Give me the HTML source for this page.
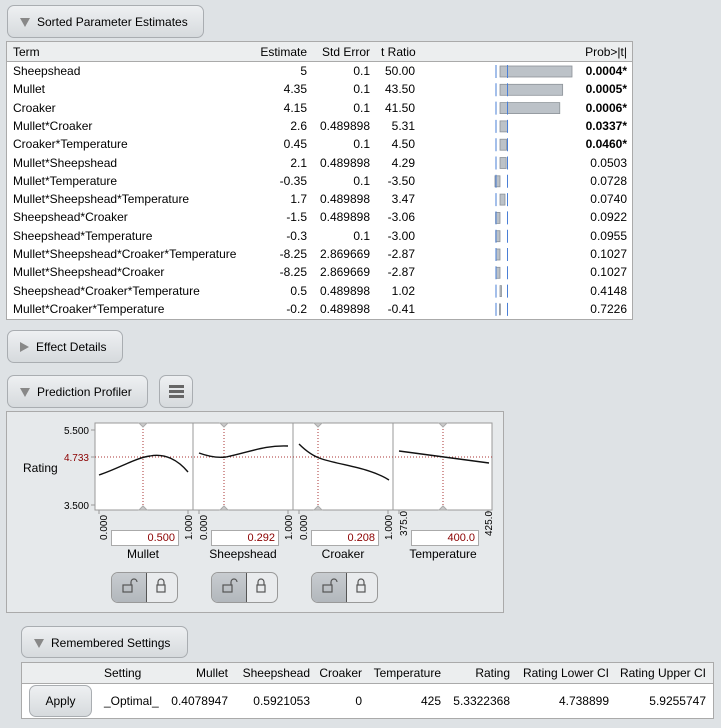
<!DOCTYPE html>
<html><head><style>
body{margin:0;width:721px;height:728px;background:#dee2e5;font-family:"Liberation Sans",sans-serif;font-size:12px;color:#000;position:relative;overflow:hidden}
.a{position:absolute;white-space:nowrap}
.btn{position:absolute;border:1px solid #a9adb1;border-radius:7px;background:linear-gradient(#eef0f2,#d6dadd);box-sizing:border-box}
.tri{display:inline-block;width:0;height:0;border-left:5px solid transparent;border-right:5px solid transparent;border-top:9px solid #888;margin-right:7px;vertical-align:-1px}
.trr{display:inline-block;width:0;height:0;border-top:5px solid transparent;border-bottom:5px solid transparent;border-left:9px solid #888;margin-right:7px;vertical-align:-1px}
.r{text-align:right}
.b{font-weight:bold}
.inp{position:absolute;width:68px;height:16px;background:#fff;border:1px solid #aaa;color:#8b0000;text-align:right;box-sizing:border-box;padding-right:3px;font-size:11px;line-height:14px}
.lock{position:absolute;width:67px;height:31px;border:1px solid #999;border-radius:7px;box-sizing:border-box;overflow:hidden;background:#e9ebed}
.lock div{position:absolute;top:0;bottom:0;left:0;width:34px;background:linear-gradient(#c8ccd0,#b2b7bc);border-right:1px solid #555}
</style></head><body>
<div class="btn" style="left:7px;top:5px;width:197px;height:33px;padding:9px 0 0 12px;font-size:12px"><span class="tri"></span>Sorted Parameter Estimates</div>
<div class="a" style="left:6px;top:41px;width:627px;height:279px;background:#fff;border:1px solid #aaa;box-sizing:border-box"></div>
<div class="a" style="left:7px;top:42px;width:625px;height:19px;background:#eceeef;border-bottom:1px solid #aaa"></div>
<svg class="a" style="left:0;top:0" width="721" height="330">
<g id="bars"></g>
</svg>
<div id="tbl"></div>
<div class="btn" style="left:7px;top:330px;width:116px;height:33px;padding:9px 0 0 12px"><span class="trr"></span>Effect Details</div>
<div class="btn" style="left:7px;top:375px;width:141px;height:33px;padding:9px 0 0 12px"><span class="tri"></span>Prediction Profiler</div>
<div class="btn" style="left:159px;top:375px;width:34px;height:33px"><div style="position:absolute;left:9px;top:9px;width:15px;height:3px;background:#666;box-shadow:0 5px 0 #666,0 10px 0 #666"></div></div>
<div class="a" style="left:6px;top:411px;width:498px;height:202px;border:1px solid #aaa;background:#e6e9eb;box-sizing:border-box"></div>
<svg class="a" style="left:0;top:0" width="721" height="620" font-family="Liberation Sans" font-size="10">
<rect x="95" y="423" width="397" height="87" fill="#fff" stroke="#999"/>
<line x1="193" y1="423" x2="193" y2="510" stroke="#999"/><line x1="293" y1="423" x2="293" y2="510" stroke="#999"/><line x1="393" y1="423" x2="393" y2="510" stroke="#999"/>
<g stroke="#999"><line x1="91" y1="430" x2="95" y2="430"/><line x1="91" y1="457" x2="95" y2="457"/><line x1="91" y1="505" x2="95" y2="505"/></g>
<text x="89" y="434" text-anchor="end">5.500</text>
<text x="89" y="461" text-anchor="end" fill="#8b0000">4.733</text>
<text x="89" y="509" text-anchor="end">3.500</text>
<text x="23" y="472" font-size="12">Rating</text>
<line x1="95" y1="457" x2="492" y2="457" stroke="#a33" stroke-dasharray="1,2"/>
<g stroke="#a33" stroke-dasharray="1,2"><line x1="143" y1="423" x2="143" y2="510"/><line x1="224" y1="423" x2="224" y2="510"/><line x1="318" y1="423" x2="318" y2="510"/><line x1="443" y1="423" x2="443" y2="510"/></g>
<g fill="none" stroke="#111" stroke-width="1.4">
<path d="M99,475 C120,468 135,458 150,456 C165,453 178,460 188,472"/>
<path d="M199,453 C210,457 218,458 226,457 C250,452 265,445 288,446"/>
<path d="M299,444 C305,450 312,456 322,459 C345,466 370,468 389,480"/>
<path d="M399,451 L489,463"/>
</g>
<g fill="#ccc" stroke="#aaa"><path d="M139,423 h8 l-4,4z"/><path d="M220,423 h8 l-4,4z"/><path d="M314,423 h8 l-4,4z"/><path d="M439,423 h8 l-4,4z"/>
<path d="M139,510 h8 l-4,-4z"/><path d="M220,510 h8 l-4,-4z"/><path d="M314,510 h8 l-4,-4z"/><path d="M439,510 h8 l-4,-4z"/></g>
<g stroke="#999"><line x1="99" y1="510" x2="99" y2="514"/><line x1="188" y1="510" x2="188" y2="514"/><line x1="199" y1="510" x2="199" y2="514"/><line x1="288" y1="510" x2="288" y2="514"/><line x1="299" y1="510" x2="299" y2="514"/><line x1="388" y1="510" x2="388" y2="514"/><line x1="399" y1="510" x2="399" y2="514"/><line x1="488" y1="510" x2="488" y2="514"/></g>
<g font-size="10">
<text transform="translate(107,540) rotate(-90)">0.000</text><text transform="translate(192,540) rotate(-90)">1.000</text>
<text transform="translate(207,540) rotate(-90)">0.000</text><text transform="translate(292,540) rotate(-90)">1.000</text>
<text transform="translate(307,540) rotate(-90)">0.000</text><text transform="translate(392,540) rotate(-90)">1.000</text>
<text transform="translate(407,536) rotate(-90)">375.0</text><text transform="translate(492,536) rotate(-90)">425.0</text>
</g>
<g font-size="12" text-anchor="middle"><text x="143" y="558">Mullet</text><text x="243" y="558">Sheepshead</text><text x="343" y="558">Croaker</text><text x="443" y="558">Temperature</text></g>
</svg>
<div class="inp" style="left:111px;top:530px">0.500</div>
<div class="inp" style="left:211px;top:530px">0.292</div>
<div class="inp" style="left:311px;top:530px">0.208</div>
<div class="inp" style="left:411px;top:530px">400.0</div>
<div class="lock" style="left:111px;top:572px"><div></div></div>
<div class="lock" style="left:211px;top:572px"><div></div></div>
<div class="lock" style="left:311px;top:572px"><div></div></div>
<div class="btn" style="left:21px;top:626px;width:167px;height:32px;padding:9px 0 0 12px"><span class="tri"></span>Remembered Settings</div>
<div class="a" style="left:21px;top:662px;width:693px;height:57px;background:#fff;border:1px solid #aaa;box-sizing:border-box"></div>
<div class="a" style="left:22px;top:663px;width:691px;height:20px;background:#eceeef;border-bottom:1px solid #aaa"></div>
<div class="btn" style="left:29px;top:685px;width:63px;height:32px;text-align:center;line-height:30px">Apply</div>
<div class="a" style="left:104px;top:666px">Setting</div>
<div class="a r" style="left:160px;top:666px;width:68px">Mullet</div>
<div class="a r" style="left:230px;top:666px;width:80px">Sheepshead</div>
<div class="a r" style="left:310px;top:666px;width:52px">Croaker</div>
<div class="a r" style="left:362px;top:666px;width:79px">Temperature</div>
<div class="a r" style="left:450px;top:666px;width:60px">Rating</div>
<div class="a r" style="left:510px;top:666px;width:99px">Rating Lower CI</div>
<div class="a r" style="left:610px;top:666px;width:96px">Rating Upper CI</div>
<div class="a" style="left:104px;top:694px">_Optimal_</div>
<div class="a r" style="left:160px;top:694px;width:68px">0.4078947</div>
<div class="a r" style="left:230px;top:694px;width:80px">0.5921053</div>
<div class="a r" style="left:310px;top:694px;width:52px">0</div>
<div class="a r" style="left:362px;top:694px;width:79px">425</div>
<div class="a r" style="left:450px;top:694px;width:60px">5.3322368</div>
<div class="a r" style="left:510px;top:694px;width:99px">4.738899</div>
<div class="a r" style="left:610px;top:694px;width:96px">5.9255747</div>
<svg class="a" style="left:0;top:0" width="721" height="620">
<g fill="none" stroke="#555" stroke-width="1.2">
<g id="lk"><rect x="123" y="585" width="9" height="7"/><path d="M131,585 v-3 a3,3 0 0 1 6,0"/><rect x="157" y="585" width="8" height="7"/><path d="M158,585 v-3 a3,3 0 0 1 6,0 v3"/></g>
<use href="#lk" x="100"/><use href="#lk" x="200"/>
</g></svg>
<script>
var rows=[["Sheepshead","5","0.1","50.00","0.0004*",1],["Mullet","4.35","0.1","43.50","0.0005*",1],["Croaker","4.15","0.1","41.50","0.0006*",1],["Mullet*Croaker","2.6","0.489898","5.31","0.0337*",1],["Croaker*Temperature","0.45","0.1","4.50","0.0460*",1],["Mullet*Sheepshead","2.1","0.489898","4.29","0.0503",0],["Mullet*Temperature","-0.35","0.1","-3.50","0.0728",0],["Mullet*Sheepshead*Temperature","1.7","0.489898","3.47","0.0740",0],["Sheepshead*Croaker","-1.5","0.489898","-3.06","0.0922",0],["Sheepshead*Temperature","-0.3","0.1","-3.00","0.0955",0],["Mullet*Sheepshead*Croaker*Temperature","-8.25","2.869669","-2.87","0.1027",0],["Mullet*Sheepshead*Croaker","-8.25","2.869669","-2.87","0.1027",0],["Sheepshead*Croaker*Temperature","0.5","0.489898","1.02","0.4148",0],["Mullet*Croaker*Temperature","-0.2","0.489898","-0.41","0.7226",0]];
var h='<div class="a" style="left:13px;top:45px">Term</div><div class="a r" style="left:240px;top:45px;width:67px">Estimate</div><div class="a r" style="left:310px;top:45px;width:60px">Std Error</div><div class="a" style="left:381px;top:45px">t Ratio</div><div class="a r" style="left:560px;top:45px;width:67px">Prob&gt;|t|</div>';
var s='',L='';
rows.forEach(function(r,i){var y=64+i*18.3;
h+='<div class="a" style="left:13px;top:'+y+'px">'+r[0]+'</div><div class="a r" style="left:240px;top:'+y+'px;width:67px">'+r[1]+'</div><div class="a r" style="left:310px;top:'+y+'px;width:60px">'+r[2]+'</div><div class="a r" style="left:370px;top:'+y+'px;width:45px">'+r[3]+'</div><div class="a r'+(r[5]?' b':'')+'" style="left:560px;top:'+y+'px;width:67px">'+r[4]+'</div>';
var t=parseFloat(r[3]),w=Math.abs(t)*1.44,x=t<0?500-w:500,by=y+1;
L+='<line x1="496" y1="'+by+'" x2="496" y2="'+(by+13)+'" stroke="#4a7fd6"/><line x1="507.5" y1="'+by+'" x2="507.5" y2="'+(by+13)+'" stroke="#4a7fd6"/>';
s+='<rect x="'+x+'" y="'+(by+1)+'" width="'+Math.max(w,1)+'" height="11" fill="#bcc2c8" stroke="#8c9298" stroke-width="0.8"/>';});
document.getElementById('tbl').innerHTML=h;document.getElementById('bars').innerHTML=s+L;
</script>
</body></html>
